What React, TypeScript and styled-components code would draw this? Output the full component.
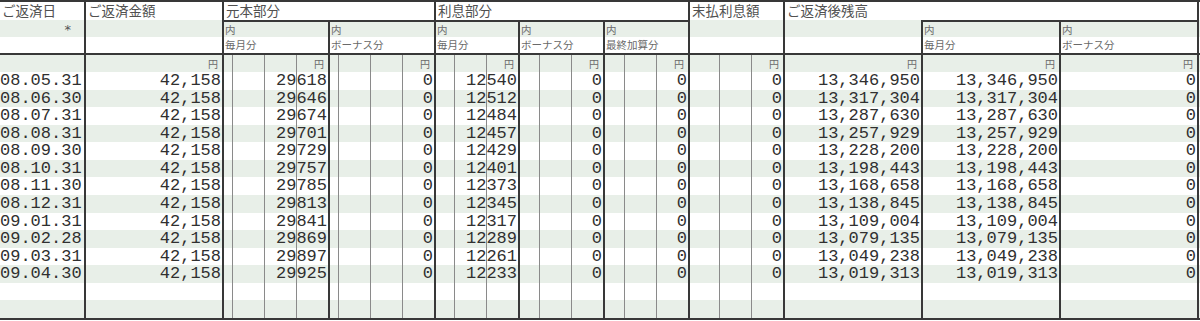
import React from 'react';
import styled, { createGlobalStyle, css } from 'styled-components';

// column widths incl. the 2px heavy rule on the right of each column
const COLS = '86px 138px 106px 106px 84px 85px 85px 95px 138px 138px 138px';
const INK = '#383838';
const GUIDE = '#8a8a8a';
const GREEN = '#e8efe8';
const ROW_H = 17.57;

const GlobalStyle = createGlobalStyle`
  html, body {
    margin: 0;
    padding: 0;
    background: #fff;
  }
`;

const Sheet = styled.div`
  width: 1200px;
  border-top: 2px solid ${INK};
  border-bottom: 2px solid ${INK};
  font-family: 'Noto Sans CJK JP', sans-serif;
`;

const Row = styled.div<{ $h: number; $shade?: boolean; $rule?: boolean }>`
  display: grid;
  grid-template-columns: ${COLS};
  box-sizing: border-box;
  height: ${(p) => p.$h}px;
  background: ${(p) => (p.$shade ? GREEN : '#fff')};
  border-bottom: ${(p) => (p.$rule ? `2px solid ${INK}` : 'none')};
`;

const Title = styled.div<{ $span?: number }>`
  grid-column: span ${(p) => p.$span ?? 1};
  box-sizing: border-box;
  border-right: 2px solid ${INK};
  padding-left: 2px;
  font-size: 13.5px;
  line-height: 17px;
  color: #505050;
  white-space: nowrap;
`;

const Sub = styled.div<{ $capped?: boolean }>`
  box-sizing: border-box;
  border-right: 2px solid ${INK};
  border-top: ${(p) => (p.$capped ? `2px solid ${INK}` : '0')};
  padding-left: 1px;
  font-size: 10.5px;
  line-height: 15px;
  color: #6a6a6a;
  white-space: nowrap;
`;

// the asterisk under ご返済日
const Mark = styled(Sub)`
  text-align: right;
  padding: 3px 13px 0 0;
  font-family: 'DejaVu Sans', sans-serif;
  font-size: 13px;
  line-height: 14px;
  color: #555;
`;

const Cell = styled.div<{ $guides?: boolean }>`
  box-sizing: border-box;
  border-right: 2px solid ${INK};
  white-space: nowrap;
  ${(p) =>
    p.$guides &&
    css`
      background-image: repeating-linear-gradient(to left, transparent 0 31px, ${GUIDE} 31px 32px);
    `}
`;

const UnitCell = styled(Cell)`
  text-align: right;
  padding-right: 4px;
  font-size: 10px;
  line-height: 17px;
  color: #6a6a6a;
`;

const NumCell = styled(Cell)<{ $left?: boolean }>`
  text-align: ${(p) => (p.$left ? 'left' : 'right')};
  padding-right: ${(p) => (p.$left ? '0' : '1px')};
  font-family: 'Liberation Mono', 'DejaVu Sans Mono', monospace;
  font-size: 17px;
  line-height: ${ROW_H}px;
  color: #303030;
`;

type Payment = {
  date: string;
  principal: number;
  interest: number;
  balance: string;
};

const payments: Payment[] = [
  { date: '08.05.31', principal: 29618, interest: 12540, balance: '13,346,950' },
  { date: '08.06.30', principal: 29646, interest: 12512, balance: '13,317,304' },
  { date: '08.07.31', principal: 29674, interest: 12484, balance: '13,287,630' },
  { date: '08.08.31', principal: 29701, interest: 12457, balance: '13,257,929' },
  { date: '08.09.30', principal: 29729, interest: 12429, balance: '13,228,200' },
  { date: '08.10.31', principal: 29757, interest: 12401, balance: '13,198,443' },
  { date: '08.11.30', principal: 29785, interest: 12373, balance: '13,168,658' },
  { date: '08.12.31', principal: 29813, interest: 12345, balance: '13,138,845' },
  { date: '09.01.31', principal: 29841, interest: 12317, balance: '13,109,004' },
  { date: '09.02.28', principal: 29869, interest: 12289, balance: '13,079,135' },
  { date: '09.03.31', principal: 29897, interest: 12261, balance: '13,049,238' },
  { date: '09.04.30', principal: 29925, interest: 12233, balance: '13,019,313' },
];

// which columns carry the thin 3-digit guide rules
const GUIDED = [false, false, true, true, true, true, true, true, false, false, false];

// 内 / 毎月分 labels per column (null = no label)
const SUBS: (string | null)[] = [null, null, '毎月分', 'ボーナス分', '毎月分', 'ボーナス分', '最終加算分', null, null, '毎月分', 'ボーナス分'];
const CAPPED = [false, false, true, true, true, true, true, false, false, true, true];

export default function App() {
  const blankRows = [0, 1];

  return (
    <>
      <GlobalStyle />
      <Sheet>
        <Row $h={17.5}>
          <Title>ご返済日</Title>
          <Title>ご返済金額</Title>
          <Title $span={2}>元本部分</Title>
          <Title $span={3}>利息部分</Title>
          <Title>末払利息額</Title>
          <Title $span={3}>ご返済後残高</Title>
        </Row>
        <Row $h={17.5} $shade>
          {SUBS.map((s, i) =>
            i === 0 ? (
              <Mark key={i}>*</Mark>
            ) : (
              <Sub key={i} $capped={CAPPED[i]}>
                {s ? '内' : ''}
              </Sub>
            ),
          )}
        </Row>
        <Row $h={18} $rule>
          {SUBS.map((s, i) => (
            <Sub key={i}>{s ?? ''}</Sub>
          ))}
        </Row>
        <Row $h={17} $shade>
          {GUIDED.map((g, i) => (
            <UnitCell key={i} $guides={g}>
              {i === 0 ? '' : '円'}
            </UnitCell>
          ))}
        </Row>
        {payments.map((p, idx) => {
          const values = [
            p.date,
            '42,158',
            String(p.principal),
            '0',
            String(p.interest),
            '0',
            '0',
            '0',
            p.balance,
            p.balance,
            '0',
          ];
          return (
            <Row key={p.date} $h={ROW_H} $shade={idx % 2 === 1}>
              {values.map((v, i) => (
                <NumCell key={i} $guides={GUIDED[i]} $left={i === 0}>
                  {v}
                </NumCell>
              ))}
            </Row>
          );
        })}
        {blankRows.map((b) => (
          <Row key={b} $h={ROW_H} $shade={b === 1}>
            {GUIDED.map((g, i) => (
              <NumCell key={i} $guides={g} />
            ))}
          </Row>
        ))}
      </Sheet>
    </>
  );
}
